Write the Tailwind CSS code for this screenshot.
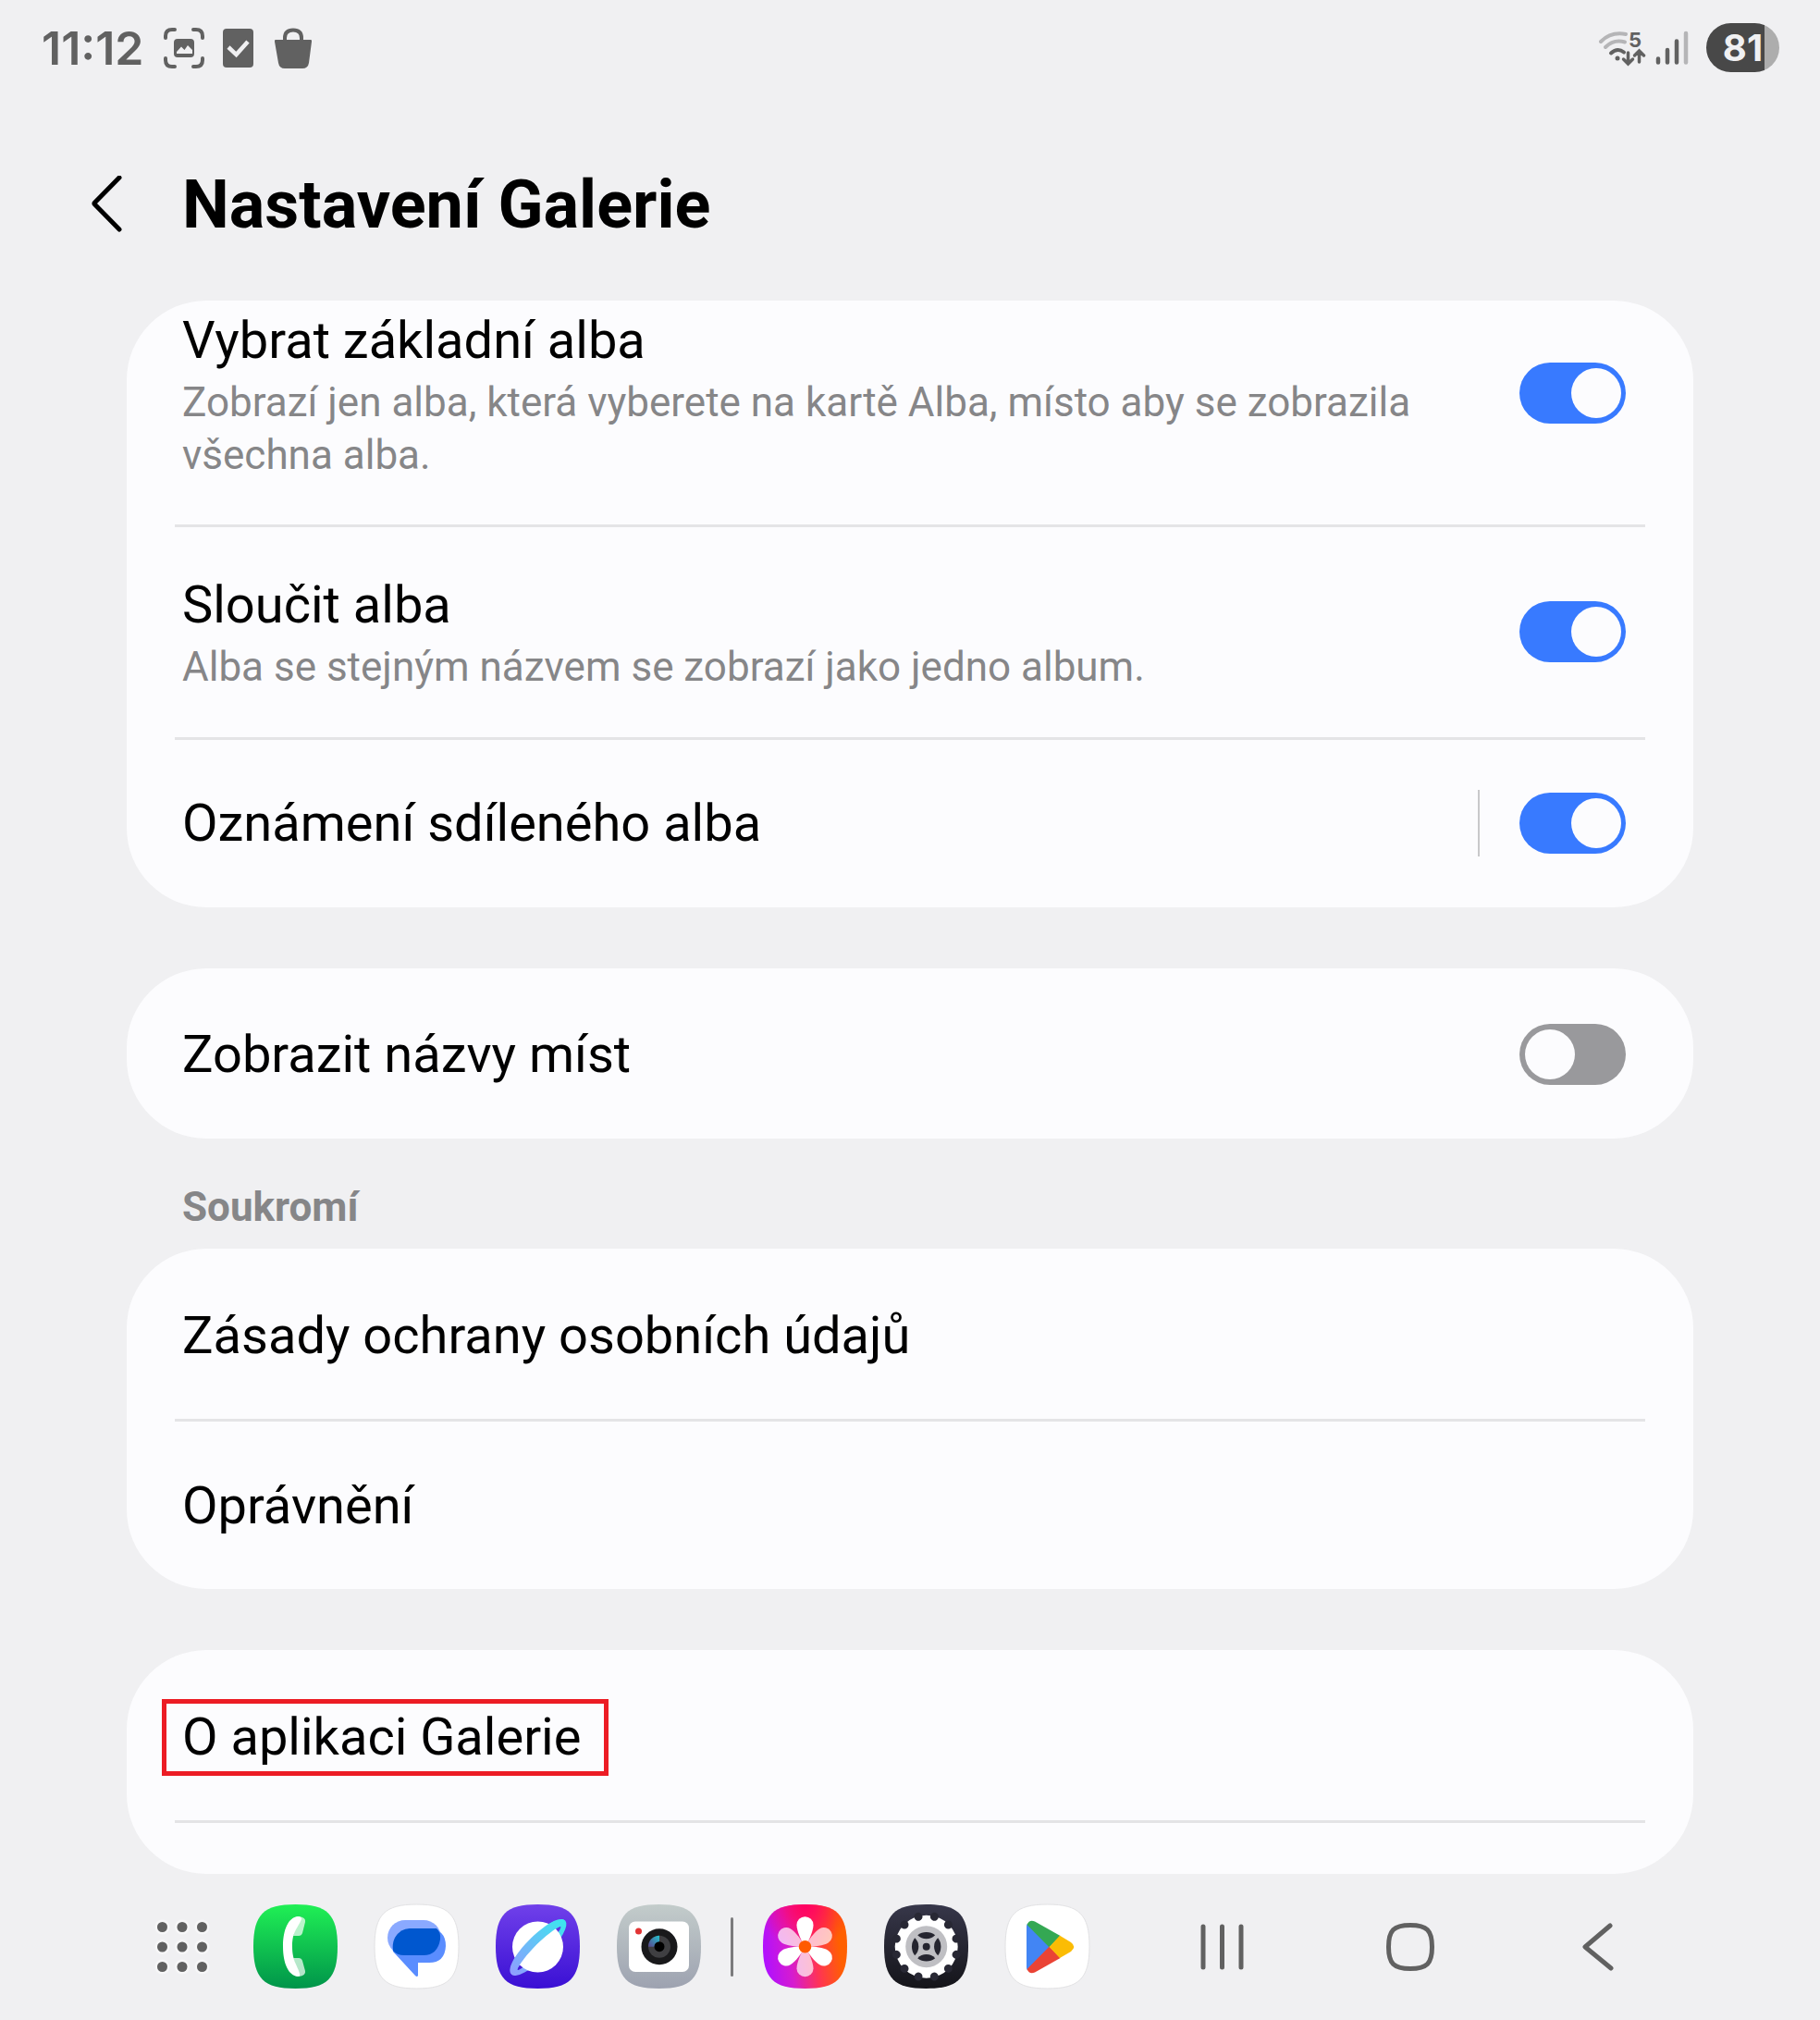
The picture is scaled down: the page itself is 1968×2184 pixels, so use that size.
<!DOCTYPE html>
<html lang="cs">
<head>
<meta charset="utf-8">
<meta name="viewport" content="width=device-width, initial-scale=1">
<title>Nastavení Galerie</title>
<script src="https://cdn.jsdelivr.net/npm/@tailwindcss/browser@4"></script>
</head>
<body class="flex min-h-screen flex-col bg-[#f0f0f2] font-['Roboto',sans-serif] text-black">

<!-- Status bar -->
<div class="flex h-[103px] items-center justify-between pr-[44px] pl-[45px] text-[#616161]">
  <div class="flex items-center">
    <span class="mr-[20px] font-['Inter',sans-serif] text-[50px] leading-[60px] font-semibold">11:12</span>
    <svg class="mr-[19px] h-[46px] w-[46px]" viewBox="0 0 46 46" fill="none" stroke="currentColor" stroke-width="4" stroke-linecap="round">
      <path d="M3 12V10Q3 3 10 3H13M33 3H36Q43 3 43 10V12M43 34V36Q43 43 36 43H33M13 43H10Q3 43 3 36V34"/>
      <rect x="12" y="13" width="22" height="20" rx="4" fill="currentColor" stroke="none"/>
      <path d="M15 29V27L20 21.5L23.500 25L27 20L32 25V29Z" fill="#f0f0f2" stroke="none"/>
    </svg>
    <svg class="mr-[21px] h-[42px] w-[34px]" viewBox="0 0 34 42">
      <rect width="33" height="42" rx="4" fill="currentColor"/>
      <path d="M6 20L14.500 28L27 14" fill="none" stroke="#f0f0f2" stroke-width="4.500"/>
    </svg>
    <svg class="h-[44px] w-[42px]" viewBox="0 0 42 44">
      <path d="M2 13H40Q41.500 13 41 15L38 38Q37 44 31 44H12Q6 44 5 38L1 15Q.5 13 2 13Z" fill="currentColor"/>
      <path d="M12 14V11Q12 2.500 21 2.500T30 11V14" fill="none" stroke="currentColor" stroke-width="4"/>
    </svg>
  </div>
  <div class="flex items-center">
    <svg class="mr-[10px] h-[40px] w-[52px]" viewBox="0 0 52 40" fill="none" stroke-width="4" stroke-linecap="round">
      <path d="M3 13Q14 2 30 5" stroke="#b5b5b7"/>
      <path d="M8 19Q17 10 29 13.500" stroke="#b5b5b7"/>
      <path d="M14 25.500Q21 19 28 24.500" stroke="currentColor"/>
      <circle cx="21" cy="31" r="2.500" fill="currentColor"/>
      <path d="M32.500 25V36M27.500 32L32.500 37L37.500 32M44.500 35V24M39.500 28L44.500 23L49.500 28" stroke="currentColor" stroke-width="3.500"/>
      <text x="33" y="19" font-family="Inter, sans-serif" font-size="22" font-weight="700" fill="currentColor">5</text>
    </svg>
    <svg class="mr-[19px] h-[38px] w-[36px]" viewBox="0 0 36 38" stroke-width="4.500" stroke-linecap="round">
      <path d="M3 30.500V34.500M13 21V34.500M23 11.500V34.500" stroke="currentColor"/>
      <path d="M33 3V34.500" stroke="#b5b5b7"/>
    </svg>
    <div class="flex h-[53px] w-[79px] items-center justify-center overflow-hidden rounded-full bg-linear-to-r from-[#484848] from-80% to-[#adadad] to-80%">
      <span class="font-['Inter',sans-serif] text-[40px] leading-[52px] font-bold text-[#f0f0f2]">81</span>
    </div>
  </div>
</div>

<!-- App bar -->
<header class="flex items-center px-[98px] pt-[77px] pb-[61px]">
  <button type="button" aria-label="Zpět" class="mr-[64px]">
    <svg class="h-[64px] w-[35px]" viewBox="0 0 35 64" fill="none" stroke="#000" stroke-width="5" stroke-linecap="round" stroke-linejoin="round"><path d="M31 2L4.500 29Q3.500 30 4.500 31L31 58"/></svg>
  </button>
  <h1 class="text-[72px] leading-[84px] font-bold">Nastavení Galerie</h1>
</header>

<main class="flex flex-col px-[137px]">
  <section class="rounded-[86px] bg-[#fcfcfe] px-[52px]">
    <label class="flex items-center pt-[4px] pr-[21px] pb-[46px] pl-[8px]">
      <span class="mr-[80px] flex-1">
        <span class="block text-[56px] leading-[78px]">Vybrat základní alba</span>
        <span class="block text-[44px] leading-[57px] text-[#868688]">Zobrazí jen alba, která vyberete na kartě Alba, místo aby se zobrazila všechna alba.</span>
      </span>
      <input type="checkbox" checked class="h-[66px] w-[115px] shrink-0 appearance-none overflow-hidden rounded-full bg-[#99999c] before:m-[6px] before:block before:size-[54px] before:rounded-full before:bg-[#fcfcfe] checked:bg-[#387aff] checked:before:ml-[56px]">
    </label>
    <hr class="border-t-3 border-[#e4e4e6]">
    <label class="flex items-center pt-[45px] pr-[21px] pb-[47px] pl-[8px]">
      <span class="mr-[80px] flex-1">
        <span class="block text-[56px] leading-[78px]">Sloučit alba</span>
        <span class="block text-[44px] leading-[57px] text-[#868688]">Alba se stejným názvem se zobrazí jako jedno album.</span>
      </span>
      <input type="checkbox" checked class="h-[66px] w-[115px] shrink-0 appearance-none overflow-hidden rounded-full bg-[#99999c] before:m-[6px] before:block before:size-[54px] before:rounded-full before:bg-[#fcfcfe] checked:bg-[#387aff] checked:before:ml-[56px]">
    </label>
    <hr class="border-t-3 border-[#e4e4e6]">
    <div class="flex items-center pt-[51px] pr-[21px] pb-[52px] pl-[8px]">
      <a href="#oznameni" id="shared-label" class="flex-1 text-[56px] leading-[78px]">Oznámení sdíleného alba</a>
      <span class="mr-[43px] h-[72px] w-[2px] bg-[#c8c8ca]"></span>
      <input type="checkbox" checked aria-labelledby="shared-label" class="h-[66px] w-[115px] shrink-0 appearance-none overflow-hidden rounded-full bg-[#99999c] before:m-[6px] before:block before:size-[54px] before:rounded-full before:bg-[#fcfcfe] checked:bg-[#387aff] checked:before:ml-[56px]">
    </div>
  </section>

  <section class="mt-[66px] rounded-[86px] bg-[#fcfcfe] px-[52px]">
    <label class="flex items-center pt-[54px] pr-[21px] pb-[52px] pl-[8px]">
      <span class="flex-1 text-[56px] leading-[78px]">Zobrazit názvy míst</span>
      <input type="checkbox" class="h-[66px] w-[115px] shrink-0 appearance-none overflow-hidden rounded-full bg-[#99999c] before:m-[6px] before:block before:size-[54px] before:rounded-full before:bg-[#fcfcfe] checked:bg-[#387aff] checked:before:ml-[56px]">
    </label>
  </section>

  <h2 class="px-[60px] pt-[46px] pb-[16px] text-[44px] leading-[57px] font-bold text-[#868688]">Soukromí</h2>

  <section class="rounded-[86px] bg-[#fcfcfe] px-[52px]">
    <a href="#zasady" class="block px-[8px] pt-[55px] pb-[51px] text-[56px] leading-[78px]">Zásady ochrany osobních údajů</a>
    <hr class="border-t-3 border-[#e4e4e6]">
    <a href="#opravneni" class="block px-[8px] pt-[52px] pb-[51px] text-[56px] leading-[78px]">Oprávnění</a>
  </section>

  <section class="mt-[66px] rounded-[86px] bg-[#fcfcfe] px-[52px] pb-[55px]">
    <a href="#o-aplikaci" class="block px-[8px] pt-[55px] pb-[51px] text-[56px] leading-[78px]">
      <span class="relative inline-block">O aplikaci Galerie<span class="absolute -top-[2px] -right-[30px] -bottom-[3px] -left-[22px] border-5 border-[#ec1c24]"></span></span>
    </a>
    <hr class="border-t-3 border-[#e4e4e6]">
  </section>
</main>

<!-- Taskbar -->
<nav class="mt-auto flex items-center pt-[33px] pr-[214px] pb-[34px] pl-[170px]">
  <button type="button" aria-label="Aplikace" class="mr-[50px]">
    <svg class="h-[54px] w-[54px]" viewBox="0 0 54 54" fill="#616161" stroke="#f7f7f8" stroke-width="5" paint-order="stroke" overflow="visible">
      <circle cx="5.500" cy="5.500" r="5.500"/><circle cx="27" cy="5.500" r="5.500"/><circle cx="48.500" cy="5.500" r="5.500"/>
      <circle cx="5.500" cy="27" r="5.500"/><circle cx="27" cy="27" r="5.500"/><circle cx="48.500" cy="27" r="5.500"/>
      <circle cx="5.500" cy="48.500" r="5.500"/><circle cx="27" cy="48.500" r="5.500"/><circle cx="48.500" cy="48.500" r="5.500"/>
    </svg>
  </button>
  <div class="flex items-center gap-[40px]">
    <button type="button" aria-label="Telefon">
      <svg class="h-[91px] w-[91px]" viewBox="0 0 91 91">
        <defs><linearGradient id="gPhone" x2="0" y2="1"><stop stop-color="#20f055"/><stop offset="1" stop-color="#00944a"/></linearGradient></defs>
        <path d="M45.500 0C80 0 91 11 91 45.500S80 91 45.500 91 0 80 0 45.500 11 0 45.500 0Z" fill="url(#gPhone)"/>
        <path d="M49 13Q57 14 56 19L53 31Q52 34 49 34H43ZM43 58H49Q52 58 53 61L56 72Q57 77 49 78Z" fill="#fff" fill-opacity=".7"/>
        <path d="M48 13C38 14 32 27 32 45.500S38 77 48 78Q51 78 50 75C48 66 42 62 42 45.500S48 26 52 16Q52 13 48 13Z" fill="#fff"/>
      </svg>
    </button>
    <button type="button" aria-label="Zprávy">
      <svg class="h-[91px] w-[91px]" viewBox="0 0 91 91" overflow="visible">
        <path d="M45.500 0C80 0 91 11 91 45.500S80 91 45.500 91 0 80 0 45.500 11 0 45.500 0Z" fill="#fff" stroke="#e2e2e4"/>
        <rect x="14" y="17" width="58" height="38" rx="19" fill="#8aa9ff"/>
        <path d="M38 26H59Q77 27 77 45Q76 63 59 63H47V77Q46 79 44 77L20 51Q17 32 38 26Z" fill="#5a8dff"/>
        <path d="M38 26H67Q72 30 71 38Q68 55 53 55H32Q24 55 20 50Q19 42 22 36Q28 26 38 26Z" fill="#0057cf"/>
      </svg>
    </button>
    <button type="button" aria-label="Internet">
      <svg class="h-[91px] w-[91px]" viewBox="0 0 91 91">
        <defs>
          <linearGradient id="gNet" x2="0" y2="1"><stop stop-color="#7040ea"/><stop offset="1" stop-color="#3a10d4"/></linearGradient>
          <linearGradient id="gRing" x1="-40" x2="40" y1="0" y2="0" gradientUnits="userSpaceOnUse"><stop stop-color="#8f9dff"/><stop offset="1" stop-color="#3ce6ee"/></linearGradient>
        </defs>
        <path d="M45.500 0C80 0 91 11 91 45.500S80 91 45.500 91 0 80 0 45.500 11 0 45.500 0Z" fill="url(#gNet)"/>
        <path transform="translate(45.500 46) rotate(-45)" d="M-41 1A41 13 0 0 1 41 1A41 12 0 0 1 -41 1ZM-33 2A33 4 0 0 0 33 2A33 4 0 0 0 -33 2Z" fill="url(#gRing)" fill-rule="evenodd"/>
        <circle cx="45.500" cy="46" r="27.500" fill="#fff"/>
        <path transform="translate(45.500 46) rotate(-45)" d="M-41 1C-41 -16 41 -16 41 1Q40 4 34 2C20 -4 -20 -4 -34 2Q-40 4 -41 1Z" fill="url(#gRing)"/>
      </svg>
    </button>
    <button type="button" aria-label="Fotoaparát">
      <svg class="h-[91px] w-[91px]" viewBox="0 0 91 91">
        <defs><linearGradient id="gCam" x2="0" y2="1"><stop stop-color="#c3cccb"/><stop offset="1" stop-color="#9da2b0"/></linearGradient>
        <linearGradient id="gLens" x1="1" y1="0" x2="0" y2="1"><stop stop-color="#20c4cc"/><stop offset="1" stop-color="#5d4490"/></linearGradient></defs>
        <path d="M45.500 0C80 0 91 11 91 45.500S80 91 45.500 91 0 80 0 45.500 11 0 45.500 0Z" fill="url(#gCam)"/>
        <rect x="13" y="18.500" width="65" height="54.500" rx="7" fill="#fff"/>
        <circle cx="23.500" cy="29" r="3.500" fill="#e23434"/>
        <circle cx="46" cy="45.700" r="19.500" fill="#19191b"/>
        <circle cx="46" cy="45.700" r="12" fill="#3f3f42"/>
        <path d="M46 45.700V33.700A12 12 0 0 0 34 45.700Z" fill="url(#gLens)"/>
        <circle cx="46" cy="45.700" r="5.500"/>
      </svg>
    </button>
  </div>
  <span class="mx-[32px] h-[64px] w-[3px] rounded-full bg-[#7b7b7d]"></span>
  <div class="flex items-center gap-[40px]">
    <button type="button" aria-label="Galerie">
      <svg class="h-[91px] w-[91px]" viewBox="0 0 91 91">
        <defs>
          <linearGradient id="gGal" x1="0" y1=".55" x2="1" y2=".4"><stop stop-color="#b010ff"/><stop offset=".3" stop-color="#d61ccf"/><stop offset=".6" stop-color="#ff3355"/><stop offset=".9" stop-color="#ff6000"/></linearGradient>
          <radialGradient id="gTop" cx=".5" cy="0" r=".55"><stop stop-color="#ff0062"/><stop offset="1" stop-color="#ff0062" stop-opacity="0"/></radialGradient>
        </defs>
        <path d="M45.500 0C80 0 91 11 91 45.500S80 91 45.500 91 0 80 0 45.500 11 0 45.500 0Z" fill="url(#gGal)"/>
        <path d="M45.500 0C80 0 91 11 91 45.500S80 91 45.500 91 0 80 0 45.500 11 0 45.500 0Z" fill="url(#gTop)"/>
        <g transform="translate(45.500 45.700)" fill="#fff">
          <path id="petal" d="M0 0C-4 -6 -9 -17 -9 -23.500A9 9 0 0 1 9 -23.500C9 -17 4 -6 0 0Z"/>
          <use href="#petal" transform="rotate(120)"/><use href="#petal" transform="rotate(240)"/>
          <g fill-opacity=".7"><use href="#petal" transform="rotate(60)"/><use href="#petal" transform="rotate(180)"/><use href="#petal" transform="rotate(300)"/></g>
          <circle r="6.800" fill="#ff5a00"/>
        </g>
      </svg>
    </button>
    <button type="button" aria-label="Nastavení">
      <svg class="h-[91px] w-[91px]" viewBox="0 0 91 91">
        <defs><linearGradient id="gSet" x2="0" y2="1"><stop stop-color="#37374a"/><stop offset="1" stop-color="#141419"/></linearGradient></defs>
        <path d="M45.500 0C80 0 91 11 91 45.500S80 91 45.500 91 0 80 0 45.500 11 0 45.500 0Z" fill="url(#gSet)"/>
        <g transform="translate(45.700 45.700)">
          <circle r="34" fill="#fff"/>
          <g fill="#282834">
            <circle id="notch" cy="-33.500" r="4.500" transform="rotate(15)"/>
            <use href="#notch" transform="rotate(30)"/><use href="#notch" transform="rotate(60)"/><use href="#notch" transform="rotate(90)"/><use href="#notch" transform="rotate(120)"/><use href="#notch" transform="rotate(150)"/><use href="#notch" transform="rotate(180)"/><use href="#notch" transform="rotate(210)"/><use href="#notch" transform="rotate(240)"/><use href="#notch" transform="rotate(270)"/><use href="#notch" transform="rotate(300)"/><use href="#notch" transform="rotate(330)"/>
          </g>
          <circle r="22.500" fill="#bfbfc3"/>
          <g fill="#25252f">
            <path id="slot" d="M-9.500 -12.500A15.500 15.500 0 0 1 9.500 -12.500A13 13 0 0 1 -9.500 -12.500Z"/>
            <use href="#slot" transform="rotate(90)"/><use href="#slot" transform="rotate(180)"/><use href="#slot" transform="rotate(270)"/>
            <circle r="4"/>
          </g>
        </g>
      </svg>
    </button>
    <button type="button" aria-label="Obchod Play">
      <svg class="h-[91px] w-[91px]" viewBox="0 0 91 91" overflow="visible">
        <path d="M45.500 0C80 0 91 11 91 45.500S80 91 45.500 91 0 80 0 45.500 11 0 45.500 0Z" fill="#fff" stroke="#e2e2e4"/>
        <path d="M24 21Q23 22 23 24V68Q23 70 24 71L48 46Z" fill="#4285f4"/>
        <path d="M23.500 22Q26 16 32 18.500L59.500 34L47.700 46.500Z" fill="#34a853"/>
        <path d="M23.500 70Q26 76 32 73.500L59.500 58L47.700 45.500Z" fill="#ea4335"/>
        <path d="M59 33.700L71 41Q77.500 45.700 71 51L59 58L47.700 45.900Z" fill="#fbbc04"/>
      </svg>
    </button>
  </div>
  <div class="ml-auto flex items-center gap-[151px]">
    <button type="button" aria-label="Poslední">
      <svg class="h-[52px] w-[52px]" viewBox="0 0 52 52" stroke="#616161" stroke-width="5" stroke-linecap="round"><path d="M5 4V48M25.500 4V48M46 4V48"/></svg>
    </button>
    <button type="button" aria-label="Domů">
      <svg class="h-[52px] w-[52px]" viewBox="0 0 52 52" fill="none" stroke="#616161" stroke-width="5"><path d="M26 2.500C44 2.500 49.500 8 49.500 26S44 49.500 26 49.500 2.500 44 2.500 26 8 2.500 26 2.500Z"/></svg>
    </button>
    <button type="button" aria-label="Zpět">
      <svg class="h-[52px] w-[52px]" viewBox="0 0 52 52" fill="none" stroke="#616161" stroke-width="5" stroke-linecap="round" stroke-linejoin="round"><path d="M39 3L12 26L40 49"/></svg>
    </button>
  </div>
</nav>
</body>
</html>
